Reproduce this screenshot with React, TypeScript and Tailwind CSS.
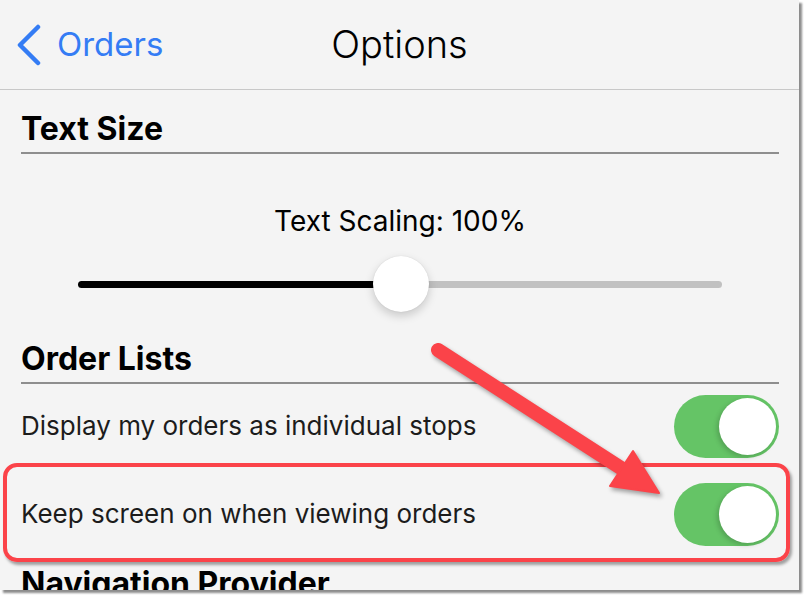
import React from 'react';

const font = { fontFamily: 'Inter, "Liberation Sans", sans-serif' };

const Toggle: React.FC<{ on?: boolean }> = ({ on = true }) => (
  <div className={`flex h-[63px] w-[105px] shrink-0 items-center rounded-full p-[3px] ${on ? 'justify-end bg-[#65c466]' : 'justify-start bg-[#e5e5ea]'}`}>
    <div className="h-[57px] w-[57px] rounded-full bg-white shadow-[-2px_2px_5px_rgba(0,0,0,0.18)]" />
  </div>
);

const SectionHeader: React.FC<{ title: string; className?: string }> = ({ title, className = '' }) => (
  <div className={`border-b-2 border-[#8e8e8e] pb-[5px] ${className}`}>
    <h2 className="text-[32px] font-bold leading-[36px] text-black">{title}</h2>
  </div>
);

export default function App() {
  const scale = 100;

  return (
    <div className="min-h-[600px] w-[809px] bg-white" style={font}>
      <div className="relative h-[590px] w-[799px] overflow-hidden bg-[#f4f4f4] shadow-[3px_3px_2px_rgba(0,0,0,0.45)]">
        {/* nav bar */}
        <div className="grid h-[90px] grid-cols-[1fr_auto_1fr] items-center border-b border-[#c8c8c8]">
          <div className="flex items-center pl-[16px]">
            <svg width="26" height="42" viewBox="0 0 26 42" fill="none">
              <path d="M22 3 L4 21 L22 39" stroke="#347cf4" strokeWidth="4.5" strokeLinecap="round" strokeLinejoin="round" />
            </svg>
            <span className="ml-[15px] text-[33px] text-[#347cf4]">Orders</span>
          </div>
          <h1 className="text-[38px] font-light text-black">Options</h1>
          <div />
        </div>

        <div className="px-[21px] pr-[20px]">
          <SectionHeader title="Text Size" className="pt-[21px]" />

          <p className="mt-[51px] text-center text-[28px] leading-[32px] text-black">Text Scaling: {scale}%</p>

          {/* slider */}
          <div className="mt-[19px] flex h-[56px] items-center px-[57px]">
            <div className="relative flex h-[7px] w-full">
              <div className="h-full w-[323px] rounded-l-full bg-black" />
              <div className="h-full flex-1 rounded-r-full bg-[#c1c1c1]" />
              <div className="absolute left-[295px] top-[-25px] h-[56px] w-[56px] rounded-full bg-white shadow-[0_4px_10px_rgba(0,0,0,0.18),0_0_1px_rgba(0,0,0,0.15)]" />
            </div>
          </div>

          <SectionHeader title="Order Lists" className="mt-[29px]" />

          <div className="flex h-[84px] items-center justify-between">
            <span className="text-[26px] leading-[32px] text-[#1c1c1c]">Display my orders as individual stops</span>
            <Toggle />
          </div>

          <div className="relative flex h-[92px] items-center justify-between">
            <span className="text-[26px] leading-[32px] text-[#1c1c1c]">Keep screen on when viewing orders</span>
            <Toggle />
            <div className="pointer-events-none absolute -bottom-[2px] -left-[18px] -right-[11px] -top-[5px] rounded-[14px] border-[4px] border-[#fb4349] shadow-[2px_3px_3px_rgba(0,0,0,0.35)]" />
          </div>

          <h2 className="mt-[6px] text-[32px] font-bold leading-[36px] text-black">Navigation Provider</h2>
        </div>

        {/* annotation arrow */}
        <svg
          className="pointer-events-none absolute inset-0 drop-shadow-[2px_3px_2px_rgba(0,0,0,0.35)]"
          width="799"
          height="590"
          viewBox="0 0 799 590"
        >
          <line x1="438" y1="350" x2="624" y2="470" stroke="#fb4349" strokeWidth="14" strokeLinecap="round" />
          <polygon points="633,451 610,486 659,493" fill="#fb4349" stroke="#fb4349" strokeWidth="2" strokeLinejoin="round" />
        </svg>
      </div>
    </div>
  );
}
